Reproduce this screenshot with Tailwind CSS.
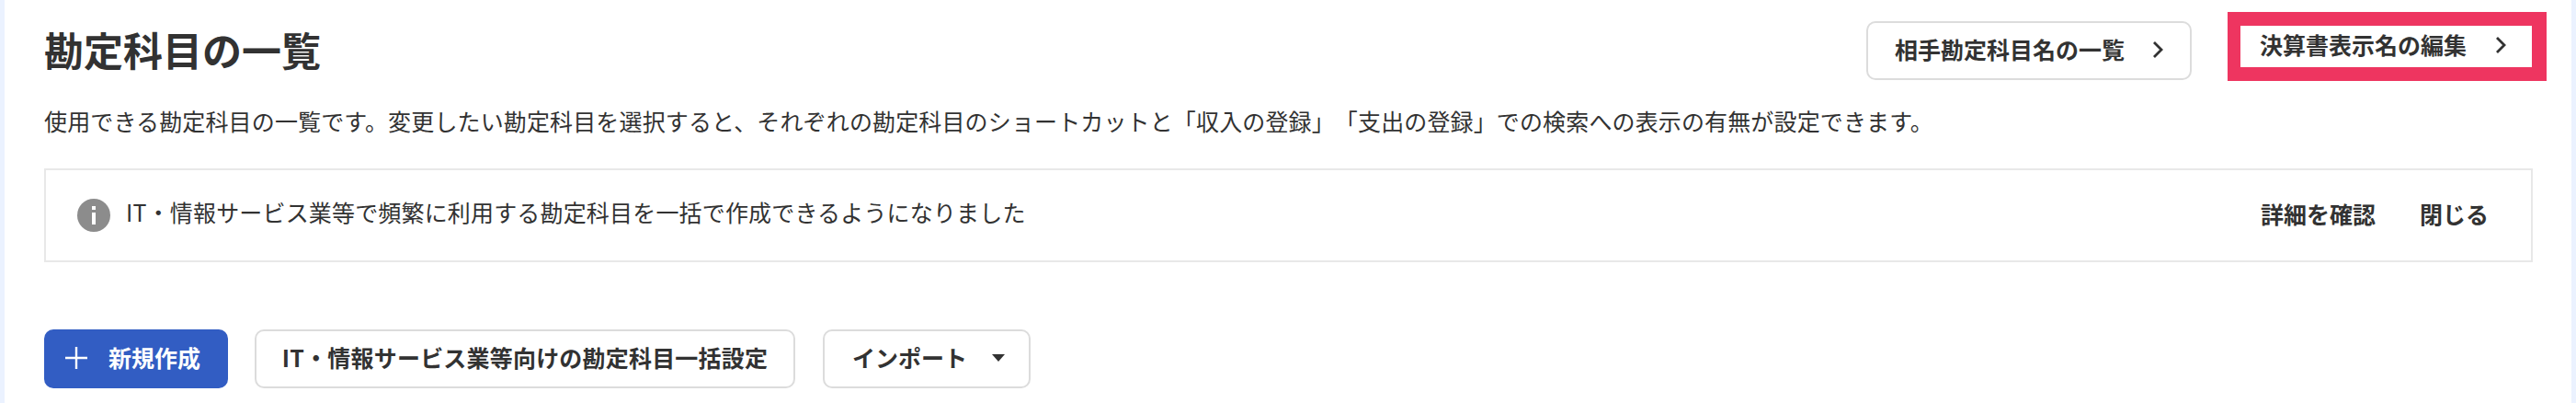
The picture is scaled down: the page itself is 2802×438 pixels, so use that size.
<!DOCTYPE html>
<html lang="ja">
<head>
<meta charset="utf-8">
<script src="https://cdn.jsdelivr.net/npm/@tailwindcss/browser@4"></script>
</head>
<body class="bg-[#ebf2ff] h-[438px] overflow-hidden text-[#323232] font-['Noto_Sans_CJK_JP','Noto_Sans',sans-serif] [text-spacing-trim:space-all]">
<main class="ml-[5px] mr-[5px] h-[438px] bg-white pl-[43px] pr-[42px] pt-[13px]">
  <header class="flex justify-between items-start h-[75px]">
    <h1 class="mt-[10px] text-[43px] leading-[60px] font-bold tracking-normal">勘定科目の一覧</h1>
    <div class="flex items-start -mr-[15px]">
      <button class="mt-[10px] flex items-center justify-between w-[354px] h-[64px] pl-[29px] pr-[29px] pb-[3px] border-2 border-[#dcdcdc] rounded-[10px] bg-white text-[25px] font-bold">
        <span>相手勘定科目名の一覧</span>
        <svg class="w-[12px] h-[18px]" viewBox="0 0 12 18" fill="none" stroke="#323232" stroke-width="2.8"><path d="M2 1l8 8-8 8"/></svg>
      </button>
      <button class="ml-[39px] flex items-center justify-between w-[347px] h-[75px] pl-[21px] pr-[28px] pb-[3px] border-l-[14px] border-r-[16px] border-y-[15px] border-[#ee3560] bg-white text-[25px] font-bold">
        <span>決算書表示名の編集</span>
        <svg class="w-[12px] h-[18px]" viewBox="0 0 12 18" fill="none" stroke="#323232" stroke-width="2.8"><path d="M2 1l8 8-8 8"/></svg>
      </button>
    </div>
  </header>
  <p class="mt-[25px] text-[25px] leading-[36px] tracking-[0.14px] whitespace-nowrap">使用できる勘定科目の一覧です。変更したい勘定科目を選択すると、それぞれの勘定科目のショートカットと「収入の登録」「支出の登録」での検索への表示の有無が設定できます。</p>
  <section class="mt-[34px] h-[102px] border-2 border-[#e8e8e8] flex items-center justify-between pl-[34px] pr-[46px]">
    <div class="flex items-center gap-[17px]">
      <svg class="w-[36px] h-[36px]" viewBox="0 0 36 36"><circle cx="18" cy="18" r="18" fill="#8c8c8c"/><rect x="16" y="8" width="4" height="4" fill="#fff"/><rect x="16" y="15" width="4" height="13" fill="#fff"/></svg>
      <span class="text-[25px] leading-[36px] tracking-[0.17px] -mt-[8px]">IT・情報サービス業等で頻繁に利用する勘定科目を一括で作成できるようになりました</span>
    </div>
    <div class="flex items-center gap-[48px] text-[25px] font-bold -mt-[3px]">
      <span>詳細を確認</span>
      <span>閉じる</span>
    </div>
  </section>
  <nav class="mt-[73px] flex">
    <button class="w-[200px] h-[64px] flex items-center pl-[23px] pb-[2px] rounded-[10px] bg-[#325dc3] text-white text-[25px] font-bold">
      <svg class="w-[24px] h-[24px]" viewBox="0 0 24 24" stroke="#fff" stroke-width="2.4"><path d="M0 12h24M12 0v24"/></svg>
      <span class="ml-[23px]">新規作成</span>
    </button>
    <button class="ml-[29px] w-[588px] h-[64px] pb-[2px] border-2 border-[#dcdcdc] rounded-[10px] bg-white text-[25px] font-bold tracking-[0.2px]">IT・情報サービス業等向けの勘定科目一括設定</button>
    <button class="ml-[30px] w-[226px] h-[64px] flex items-center justify-between pl-[30px] pr-[26px] pb-[2px] border-2 border-[#dcdcdc] rounded-[10px] bg-white text-[25px] font-bold">
      <span>インポート</span>
      <svg class="w-[14px] h-[8px]" viewBox="0 0 14 8"><path d="M0 0h14L7 8z" fill="#323232"/></svg>
    </button>
  </nav>
</main>
</body>
</html>
